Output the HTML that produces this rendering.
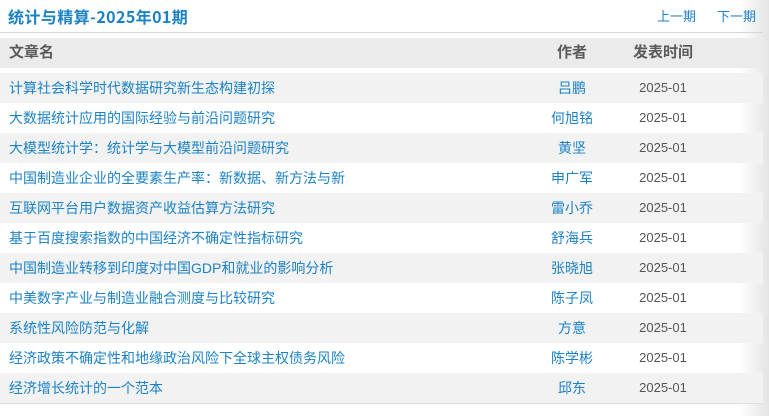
<!DOCTYPE html>
<html><head><meta charset="utf-8"><style>
body{margin:0;width:769px;height:416px;overflow:hidden;background:#fff;font-family:"Liberation Sans","Noto Sans CJK SC",sans-serif;position:relative}
.sh{position:absolute;right:0;top:0;width:30px;height:416px;background:linear-gradient(to right,rgba(255,255,255,0),#e4e4e4)}
.wrap{position:absolute;left:0;top:0;width:763px}
.title{position:absolute;left:8px;top:4px;font-size:16px;font-weight:bold;color:#1b82c6;letter-spacing:0.4px;font-family:"Noto Sans CJK SC","Liberation Sans",sans-serif}
.nav{position:absolute;top:6px;font-size:13px;color:#1b82c6}
.line{position:absolute;left:0;top:32px;width:763px;height:1px;background:#d6d6d6}
.hd{position:absolute;left:0;top:38px;width:763px;height:30px;background:#ebebeb;font-size:15px;font-weight:bold;color:#5a5a5a}
.row{position:absolute;left:0;width:763px;height:30px;font-size:14px}
.row.g{background:#f2f2f2}
.c1{position:absolute;left:9px;top:0;line-height:30px;color:#1b82c6;white-space:nowrap}
.c2{position:absolute;left:532px;width:80px;text-align:center;line-height:30px;color:#1b82c6}
.c3{position:absolute;left:618px;width:90px;text-align:center;line-height:30px;color:#555;font-size:13px}
.hd .c1,.hd .c2,.hd .c3{color:#5a5a5a;font-size:15px}
.bl{position:absolute;left:0;top:403px;width:763px;height:1px;background:#dedede}
</style></head><body>
<div class="sh"></div>
<div class="wrap">
<div class="title">统计与精算-2025年01期</div>
<div class="nav" style="left:657px">上一期</div>
<div class="nav" style="left:717px">下一期</div>
<div class="line"></div>
<div class="hd"><span class="c1">文章名</span><span class="c2">作者</span><span class="c3">发表时间</span></div>
<div class="row g" style="top:73px"><span class="c1">计算社会科学时代数据研究新生态构建初探</span><span class="c2">吕鹏</span><span class="c3">2025-01</span></div>
<div class="row" style="top:103px"><span class="c1">大数据统计应用的国际经验与前沿问题研究</span><span class="c2">何旭铭</span><span class="c3">2025-01</span></div>
<div class="row g" style="top:133px"><span class="c1">大模型统计学：统计学与大模型前沿问题研究</span><span class="c2">黄坚</span><span class="c3">2025-01</span></div>
<div class="row" style="top:163px"><span class="c1">中国制造业企业的全要素生产率：新数据、新方法与新</span><span class="c2">申广军</span><span class="c3">2025-01</span></div>
<div class="row g" style="top:193px"><span class="c1">互联网平台用户数据资产收益估算方法研究</span><span class="c2">雷小乔</span><span class="c3">2025-01</span></div>
<div class="row" style="top:223px"><span class="c1">基于百度搜索指数的中国经济不确定性指标研究</span><span class="c2">舒海兵</span><span class="c3">2025-01</span></div>
<div class="row g" style="top:253px"><span class="c1">中国制造业转移到印度对中国GDP和就业的影响分析</span><span class="c2">张晓旭</span><span class="c3">2025-01</span></div>
<div class="row" style="top:283px"><span class="c1">中美数字产业与制造业融合测度与比较研究</span><span class="c2">陈子凤</span><span class="c3">2025-01</span></div>
<div class="row g" style="top:313px"><span class="c1">系统性风险防范与化解</span><span class="c2">方意</span><span class="c3">2025-01</span></div>
<div class="row" style="top:343px"><span class="c1">经济政策不确定性和地缘政治风险下全球主权债务风险</span><span class="c2">陈学彬</span><span class="c3">2025-01</span></div>
<div class="row g" style="top:373px"><span class="c1">经济增长统计的一个范本</span><span class="c2">邱东</span><span class="c3">2025-01</span></div>
<div class="bl"></div>
</div>
</body></html>
